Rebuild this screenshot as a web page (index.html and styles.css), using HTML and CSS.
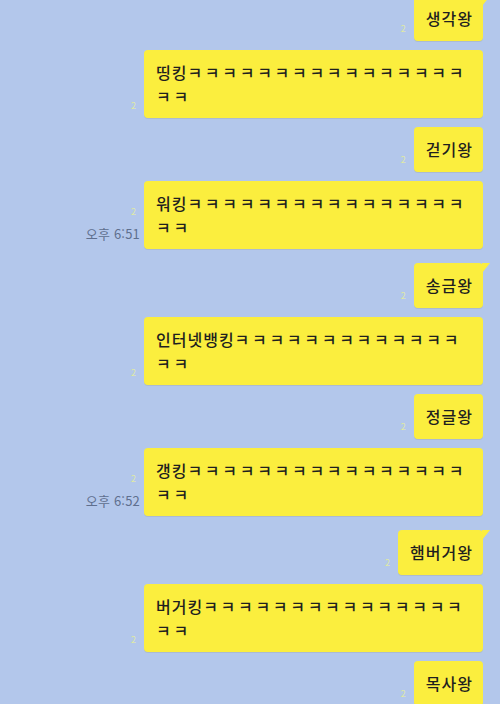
FILE: index.html
```html
<!DOCTYPE html>
<html lang="ko">
  <head>
    <meta charset="utf-8" />
    <meta name="viewport" content="width=device-width, initial-scale=1" />
    <title>채팅</title>
    <link rel="stylesheet" href="styles.css">
  </head>
  <body>
    <div class="chat">
      <!-- first group, starts above the top edge -->
      <div class="group">
        <div class="row">
          <div class="meta"><span class="read">2</span></div>
          <div class="bubble tail">생각왕</div>
        </div>
        <div class="row">
          <div class="meta"><span class="read">2</span></div>
          <div class="bubble long">띵킹<span class="kk">ㅋㅋㅋㅋㅋㅋㅋㅋㅋㅋㅋㅋㅋㅋㅋㅋ</span><br><span class="kk">ㅋㅋ</span></div>
        </div>
        <div class="row">
          <div class="meta"><span class="read">2</span></div>
          <div class="bubble">걷기왕</div>
        </div>
        <div class="row">
          <div class="meta"><span class="read">2</span><span class="time">오후 6:51</span></div>
          <div class="bubble long">워킹<span class="kk">ㅋㅋㅋㅋㅋㅋㅋㅋㅋㅋㅋㅋㅋㅋㅋㅋ</span><br><span class="kk">ㅋㅋ</span></div>
        </div>
      </div>

      <div class="group">
        <div class="row">
          <div class="meta"><span class="read">2</span></div>
          <div class="bubble tail">송금왕</div>
        </div>
        <div class="row">
          <div class="meta"><span class="read">2</span></div>
          <div class="bubble long">인터넷뱅킹<span class="kk">ㅋㅋㅋㅋㅋㅋㅋㅋㅋㅋㅋㅋㅋ</span><br><span class="kk">ㅋㅋ</span></div>
        </div>
        <div class="row">
          <div class="meta"><span class="read">2</span></div>
          <div class="bubble">정글왕</div>
        </div>
        <div class="row">
          <div class="meta"><span class="read">2</span><span class="time">오후 6:52</span></div>
          <div class="bubble long">갱킹<span class="kk">ㅋㅋㅋㅋㅋㅋㅋㅋㅋㅋㅋㅋㅋㅋㅋㅋ</span><br><span class="kk">ㅋㅋ</span></div>
        </div>
      </div>

      <div class="group">
        <div class="row">
          <div class="meta"><span class="read">2</span></div>
          <div class="bubble tail">햄버거왕</div>
        </div>
        <div class="row">
          <div class="meta"><span class="read">2</span></div>
          <div class="bubble long">버거킹<span class="kk">ㅋㅋㅋㅋㅋㅋㅋㅋㅋㅋㅋㅋㅋㅋㅋ</span><br><span class="kk">ㅋㅋ</span></div>
        </div>
        <div class="row">
          <div class="meta"><span class="read">2</span></div>
          <div class="bubble">목사왕</div>
        </div>
      </div>
    </div>
  </body>
</html>
```

FILE: styles.css
```css
html,
body {
  margin: 0;
  height: 100%;
}

body {
  background-color: #b3c7eb;
  font-family: "Noto Sans CJK KR", "Noto Sans", sans-serif;
  color: #1f1f1f;
  overflow: hidden;
}

.chat {
  /* the first bubble is cut off by the top of the screen */
  margin-top: -4px;
  padding-right: 17px;
  display: flex;
  flex-direction: column;
  gap: 14px;
}

.group {
  display: flex;
  flex-direction: column;
  gap: 9px;
}

.row {
  display: flex;
  justify-content: flex-end;
  align-items: flex-end;
  gap: 4px;
}

.meta {
  display: flex;
  flex-direction: column;
  align-items: flex-end;
  padding-bottom: 6px;
}

.read {
  font-size: 9px;
  line-height: 12px;
  color: #dfe9a6;
  margin-right: 4px;
}

.time {
  margin-top: 6px;
  font-size: 13px;
  line-height: 19px;
  color: #5f6f8e;
  letter-spacing: 0.2px;
}

.bubble {
  position: relative;
  max-width: 339px;
  box-sizing: border-box;
  padding: 10px 10px 11px 12px;
  background-color: #fbee3e;
  border-radius: 4px;
  box-shadow: 0 1px 0 rgba(120, 110, 20, 0.12);
  font-size: 16px;
  font-weight: 500;
  letter-spacing: 1px;
  line-height: 24px;
}

.bubble.long {
  width: 339px;
  padding: 10px 11px 10px 12px;
}

/* the jamo are narrow in this font, the phone spaces them wider */
.kk {
  letter-spacing: 2.7px;
}

/* little corner tail on the first bubble of a group */
.bubble.tail::after {
  content: "";
  position: absolute;
  top: 0;
  right: -7px;
  width: 0;
  height: 0;
  border-top: 10px solid #fbee3e;
  border-right: 8px solid transparent;
}
```
